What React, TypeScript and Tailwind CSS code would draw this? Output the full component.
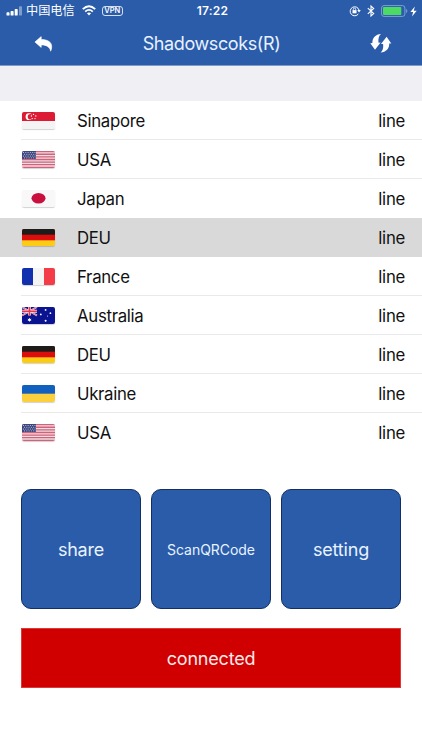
import type { ReactNode } from 'react';

type Country = 'sg' | 'us' | 'jp' | 'de' | 'fr' | 'au' | 'ua';

const rows: { flag: Country; name: string }[] = [
  { flag: 'sg', name: 'Sinapore' },
  { flag: 'us', name: 'USA' },
  { flag: 'jp', name: 'Japan' },
  { flag: 'de', name: 'DEU' },
  { flag: 'fr', name: 'France' },
  { flag: 'au', name: 'Australia' },
  { flag: 'de', name: 'DEU' },
  { flag: 'ua', name: 'Ukraine' },
  { flag: 'us', name: 'USA' },
];

const selectedRow = 3;

const art: Record<Country, ReactNode> = {
  sg: (
    <>
      <rect width="33" height="17" fill="#f4f4f4" />
      <rect width="33" height="9" fill="#dc1b35" />
      <circle cx="7" cy="4.7" r="3.4" fill="#fff" />
      <circle cx="8.5" cy="4.7" r="2.8" fill="#dc1b35" />
      <g fill="#fff">
        <circle cx="11.5" cy="2.4" r=".7" />
        <circle cx="9.4" cy="4" r=".7" />
        <circle cx="13.8" cy="4" r=".7" />
        <circle cx="10.2" cy="6.6" r=".7" />
        <circle cx="13" cy="6.6" r=".7" />
      </g>
    </>
  ),
  us: (
    <>
      <rect width="33" height="17" fill="#f1dde2" />
      <path
        d="M0 .65H33M0 3.27H33M0 5.88H33M0 8.5H33M0 11.1H33M0 13.7H33M0 16.35H33"
        stroke="#d0627a"
        strokeWidth="1.3"
      />
      <rect width="14" height="8" fill="#3d477f" />
      <path
        d="M1 1.5H14M2 3.3H14M1 5.1H14M2 6.9H14"
        stroke="#c9cbdc"
        strokeWidth=".9"
        strokeDasharray="1 1.3"
      />
    </>
  ),
  jp: (
    <>
      <rect width="33" height="17" fill="#f8f8f8" />
      <ellipse cx="16.5" cy="8.2" rx="7" ry="5.3" fill="#c90f3d" />
    </>
  ),
  de: (
    <>
      <rect width="33" height="17" fill="#fccb16" />
      <rect width="33" height="11.3" fill="#dc0d0d" />
      <rect width="33" height="5.7" fill="#1d1c1a" />
    </>
  ),
  fr: (
    <>
      <rect width="33" height="17" fill="#f4f4f4" />
      <rect width="11" height="17" fill="#1230ae" />
      <rect x="22" width="11" height="17" fill="#f43b48" />
    </>
  ),
  au: (
    <>
      <rect width="33" height="17" fill="#0b1490" />
      <path d="M0 0L15 8.5M15 0L0 8.5" stroke="#f0dbe6" strokeWidth="1.8" />
      <path d="M0 0L15 8.5M15 0L0 8.5" stroke="#e2465c" strokeWidth=".7" />
      <path d="M7.5 0V8.5M0 4.25H15" stroke="#f6e6ec" strokeWidth="2.8" />
      <path d="M7.5 0V8.5M0 4.25H15" stroke="#e8344c" strokeWidth="1.6" />
      <g fill="#fff">
        <path d="M7.5 10.7l.6 1.3 1.4-.2-.9 1.1.9 1.1-1.4-.2-.6 1.3-.6-1.3-1.4.2.9-1.1-.9-1.1 1.4.2z" />
        <circle cx="23.6" cy="2.9" r=".9" />
        <circle cx="18.8" cy="7.4" r=".9" />
        <circle cx="28.4" cy="6.2" r=".9" />
        <circle cx="25.6" cy="9" r=".55" />
        <circle cx="23.6" cy="13.8" r="1" />
      </g>
    </>
  ),
  ua: (
    <>
      <rect width="33" height="17" fill="#fbd03c" />
      <rect width="33" height="8.7" fill="#1160bf" />
    </>
  ),
};

function Flag({ code }: { code: Country }) {
  return (
    <svg
      viewBox="0 0 33 17"
      preserveAspectRatio="none"
      className="h-[17px] w-[33px] shrink-0 rounded-[2px] shadow-[0_1px_1px_rgba(0,0,0,0.18)]"
    >
      {art[code]}
    </svg>
  );
}

function StatusBar() {
  return (
    <div className="flex h-[22px] items-center justify-between pr-[5px] pl-[6px]">
      <div className="flex w-[150px] items-center">
        <svg width="17" height="10" viewBox="0 0 17 10" fill="#fff">
          <rect x="0.5" y="6.2" width="3" height="3.4" rx=".7" />
          <rect x="4.6" y="5" width="3" height="4.6" rx=".7" />
          <rect x="8.7" y="3" width="3" height="6.6" rx=".7" />
          <rect x="13" y="0.2" width="3" height="9.4" rx=".7" opacity=".4" />
        </svg>
        <span className="ml-[3px] text-[12.2px] leading-none whitespace-nowrap">中国电信</span>
        <svg className="ml-[7px]" width="14" height="11" viewBox="0 0 14 11" fill="none" stroke="#fff">
          <path d="M.8 4.1Q7-1.8 13.2 4.1" strokeWidth="1.9" />
          <path d="M3.2 6.6Q7 3.2 10.8 6.6" strokeWidth="1.8" />
          <path d="M4.9 8.2Q7 6.6 9.1 8.2L7 10.5Z" fill="#fff" stroke="none" />
        </svg>
        <span className="ml-[6px] flex h-[10px] w-[21px] items-center justify-center rounded-[3px] border border-white/80 text-[7.5px] leading-none font-semibold">
          VPN
        </span>
      </div>
      <span className="pl-[2px] text-[12px] leading-[22px] font-semibold tracking-[0.2px]">17:22</span>
      <div className="flex w-[150px] items-center justify-end">
        <svg width="12" height="12" viewBox="0 0 12 12" fill="none" stroke="#fff">
          <path d="M9.3 9A4.5 4.5 0 1 1 10 5" strokeWidth="1" />
          <path d="M8.3 5.1h3.5L10 7.4z" fill="#fff" stroke="none" />
          <rect x="3.5" y="5.1" width="4" height="3.2" fill="#fff" stroke="none" />
          <path d="M4.3 5.2V4.3a1.2 1.2 0 0 1 2.4 0v.9" strokeWidth=".8" />
        </svg>
        <svg className="ml-[6px]" width="8" height="12" viewBox="0 0 8 12" fill="none" stroke="#fff" strokeWidth="1.1">
          <path d="M.8 3.2L6.7 8.6 4 11V1L6.7 3.4.8 8.8" />
        </svg>
        <svg className="ml-[6px]" width="27" height="12" viewBox="0 0 27 12">
          <rect x=".6" y=".6" width="23.3" height="10.8" rx="2.4" fill="none" stroke="#7f9fd2" />
          <rect x="2" y="2" width="18.3" height="8" rx="1" fill="#4cd964" />
          <path d="M25.1 4v4q1.3-.6 1.3-2t-1.3-2" fill="#7f9fd2" />
        </svg>
        <svg className="ml-[2px]" width="7" height="11" viewBox="0 0 7 11" fill="#fff">
          <path d="M4.8.5L.4 6h2.7L2 10.4 6.7 4.7H3.8z" />
        </svg>
      </div>
    </div>
  );
}

function NavBar() {
  return (
    <div className="flex h-[43px] items-center justify-between px-[34px]">
      <svg width="19" height="16" viewBox="0 0 19 16" fill="#fff">
        <path
          d="M7.2.6V3.6C13 3.5 17.7 5.6 17.7 10.8 17.7 12.7 17.2 14.1 16.6 15.2 16.2 11.4 13 8.9 7.2 8.9V11.4L.9 6Z"
          strokeLinejoin="round"
          stroke="#fff"
          strokeWidth=".6"
        />
      </svg>
      <h1 className="text-[18px] leading-[43px] tracking-[-0.4px] whitespace-nowrap text-[#e8f1ff]">Shadowscoks(R)</h1>
      <svg className="-mr-[4px]" width="22" height="19" viewBox="0 0 22 19" fill="#fff">
        <path d="M16.6 2.8L21.3 9.4 19.2 9.5C19.5 14.5 16 18.2 10.6 18.5 12.8 16.6 13.6 13.8 13.1 9.9L11 10Z" />
        <path
          transform="rotate(180 10.8 9.3)"
          d="M16.6 2.8L21.3 9.4 19.2 9.5C19.5 14.5 16 18.2 10.6 18.5 12.8 16.6 13.6 13.8 13.1 9.9L11 10Z"
        />
      </svg>
    </div>
  );
}

function Tile({ text, small = false }: { text: string; small?: boolean }) {
  return (
    <button
      className={`flex h-[120px] w-[120px] items-center justify-center rounded-[10px] border border-[#142f62] bg-[#2a5caa] text-[#e8f3ff] ${
        small ? 'text-[14px] tracking-[-0.05px]' : 'text-[18px] tracking-[-0.2px]'
      }`}
    >
      {text}
    </button>
  );
}

export default function App() {
  return (
    <div className="h-[750px] w-[422px] overflow-hidden bg-white font-['Inter','Noto_Sans_CJK_SC',sans-serif]">
      <header className="h-[66px] border-b border-[#7d9ac9] bg-[#2a5caa] text-white">
        <StatusBar />
        <NavBar />
      </header>
      <div className="h-[35px] bg-[#efeff4]" />
      <ul className="h-[351px]">
        {rows.map((row, i) => (
          <li key={i} className={`flex h-[39px] ${i === selectedRow ? 'bg-[#d9d9d9]' : ''}`}>
            <div
              className={`ml-[21px] flex flex-1 items-center border-b pr-[17px] pl-px ${
                i === selectedRow || i === selectedRow - 1 || i === rows.length - 1 ? 'border-transparent' : 'border-[#e9e9eb]'
              }`}
            >
              <Flag code={row.flag} />
              <div className="ml-[22px] flex flex-1 items-center justify-between pt-[2px] text-[16.8px] leading-[24px] tracking-[-0.3px] text-[#111]">
                <span>{row.name}</span>
                <span>line</span>
              </div>
            </div>
          </li>
        ))}
      </ul>
      <div className="mx-[21px] mt-[37px] flex justify-between">
        <Tile text="share" />
        <Tile text="ScanQRCode" small />
        <Tile text="setting" />
      </div>
      <button className="mx-[21px] mt-[19px] flex h-[60px] w-[380px] items-center justify-center border border-[#dc3a3a] bg-[#d00000] text-[18px] tracking-[-0.2px] text-[#ffeaea]">
        connected
      </button>
    </div>
  );
}
